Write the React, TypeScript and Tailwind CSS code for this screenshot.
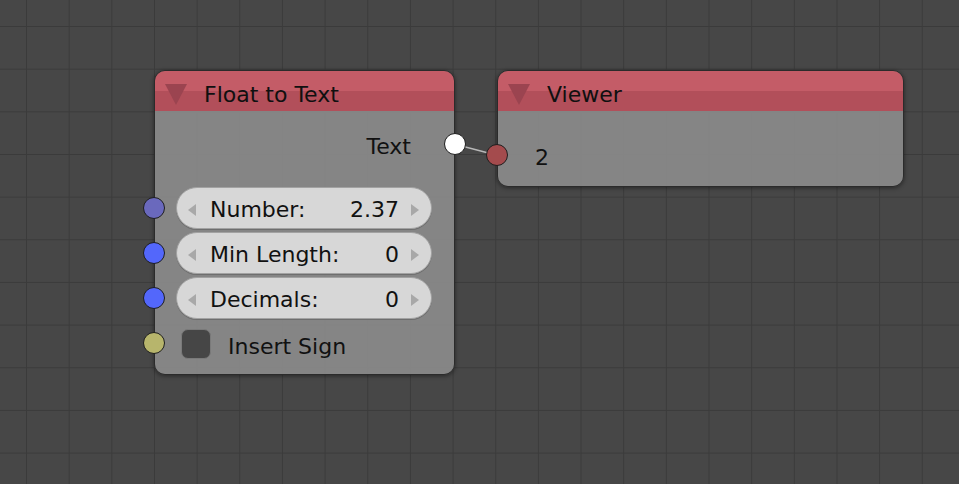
import React from "react";

interface SocketProps {
  color: string;
  className: string;
}

function Socket({ color, className }: SocketProps) {
  return (
    <div
      className={`absolute w-[22px] h-[22px] rounded-full border border-[#1e1e1e] ${className}`}
      style={{ backgroundColor: color }}
    />
  );
}

function Collapse() {
  return (
    <svg width="22" height="21" viewBox="0 0 22 21" className="shrink-0">
      <polygon points="0,0 22,0 11,21" fill="#9b4450" />
    </svg>
  );
}

function NodeHeader({ title }: { title: string }) {
  return (
    <div className="h-[40px] pt-[7px] flex items-center pl-[10px] gap-[17px] rounded-t-[10px] bg-[linear-gradient(to_bottom,#c45c67_0%,#c45c67_50%,#b24f5a_50%,#b24f5a_100%)]">
      <Collapse />
      <span className="text-[22px] leading-none text-[#101010]">{title}</span>
    </div>
  );
}

interface FieldProps {
  label: string;
  value: string;
  socket: string;
}

function NumberField({ label, value, socket }: FieldProps) {
  return (
    <div className="relative h-[42px] flex items-center">
      <Socket color={socket} className="left-[-12px] top-[10px]" />
      <div className="ml-[21px] mr-[22px] flex-1 h-[42px] rounded-full bg-[#d7d7d7] border border-[#a2a2a2] shadow-[0_1px_0_#6e6e6e] flex items-center pt-[4px] pl-[11px] pr-[12px]">
        <svg width="8" height="12" viewBox="0 0 8 12" className="shrink-0">
          <polygon points="8,0 8,12 0,6" fill="#a8a8a8" />
        </svg>
        <span className="ml-[14px] text-[22px] leading-none text-[#111]">{label}</span>
        <span className="ml-auto text-[22px] leading-none text-[#111]">{value}</span>
        <svg width="8" height="12" viewBox="0 0 8 12" className="shrink-0 ml-[12px]">
          <polygon points="0,0 0,12 8,6" fill="#a8a8a8" />
        </svg>
      </div>
    </div>
  );
}

export default function App() {
  return (
    <div className="relative w-[959px] h-[484px] overflow-hidden bg-[#474747] font-['DejaVu_Sans',sans-serif] bg-[linear-gradient(to_right,#3b3b3b_1px,transparent_1px),linear-gradient(to_bottom,#3b3b3b_1px,transparent_1px)] bg-size-[42.67px_42.67px] bg-position-[26px_26px]">
      {/* link */}
      <svg className="absolute left-0 top-0" width="959" height="484">
        <line x1="454" y1="144" x2="496" y2="155" stroke="#b8b8b8" strokeWidth="1.5" />
      </svg>

      {/* Float to Text */}
      <div className="absolute left-[154px] top-[70px] w-[301px] rounded-[11px] border border-[#2b2b2b] shadow-[0_1px_4px_rgba(0,0,0,0.45)]">
        <NodeHeader title="Float to Text" />
        <div className="rounded-b-[10px] bg-[rgba(138,138,138,0.93)] pt-[15px] pb-[9px] flex flex-col">
          <div className="relative h-[42px] flex items-center justify-end pr-[43px]">
            <span className="text-[22px] leading-none text-[#111]">Text</span>
            <Socket color="#ffffff" className="right-[-12px] top-[7px]" />
          </div>
          <div className="mt-[19px] flex flex-col gap-[3px]">
            <NumberField label="Number:" value="2.37" socket="#6a69bd" />
            <NumberField label="Min Length:" value="0" socket="#5367fb" />
            <NumberField label="Decimals:" value="0" socket="#5367fb" />
          </div>
          <div className="relative mt-[4px] h-[42px] flex items-center pl-[26px]">
            <Socket color="#b7b56c" className="left-[-12px] top-[9px]" />
            <div className="w-[30px] h-[30px] rounded-[7px] bg-[#464646] border border-[#7a7a7a]" />
            <span className="ml-[17px] mt-[6px] text-[22px] leading-none text-[#111]">Insert Sign</span>
          </div>
        </div>
      </div>

      {/* Viewer */}
      <div className="absolute left-[497px] top-[70px] w-[407px] rounded-[11px] border border-[#2b2b2b] shadow-[0_1px_4px_rgba(0,0,0,0.45)]">
        <NodeHeader title="Viewer" />
        <div className="rounded-b-[10px] bg-[rgba(138,138,138,0.93)] pt-[23px] pb-[10px]">
          <div className="relative h-[42px] flex items-center pl-[37px]">
            <Socket color="#a44b4d" className="left-[-12px] top-[10px]" />
            <span className="text-[22px] leading-none text-[#111] mt-[6px]">2</span>
          </div>
        </div>
      </div>
    </div>
  );
}
